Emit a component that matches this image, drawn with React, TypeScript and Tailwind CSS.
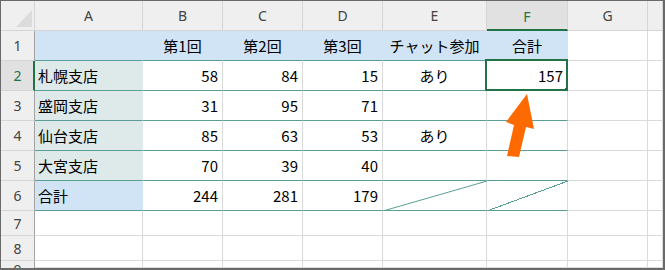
import React from "react";

type Kind = "blue" | "side" | "plain" | "out";
type Align = "l" | "c" | "r";

type CellDef = {
  t?: string;
  a?: Align;
  k: Kind;
  diag?: boolean;
  sel?: boolean;
};

const KIND_CLS: Record<Kind, string> = {
  blue: "bg-[#d0e4f5] border-r border-b border-r-[#d0e4f5] border-b-[#5b9e96]",
  side: "bg-[#deeaea] border-r border-b border-r-[#deeaea] border-b-[#5b9e96]",
  plain: "bg-white border-r border-b border-r-[#dadada] border-b-[#5b9e96]",
  out: "bg-white border-r border-b border-r-[#dadada] border-b-[#dadada]",
};

const ALIGN_CLS: Record<Align, string> = {
  l: "justify-start pl-[3px]",
  c: "justify-center",
  r: "justify-end pr-[4px]",
};

const LETTERS = ["A", "B", "C", "D", "E", "F", "G", ""];

const out: CellDef = { k: "out" };

const ROWS: CellDef[][] = [
  [
    { k: "blue" },
    { t: "第1回", a: "c", k: "blue" },
    { t: "第2回", a: "c", k: "blue" },
    { t: "第3回", a: "c", k: "blue" },
    { t: "チャット参加", a: "c", k: "blue" },
    { t: "合計", a: "c", k: "blue" },
    out,
    out,
  ],
  [
    { t: "札幌支店", a: "l", k: "side" },
    { t: "58", a: "r", k: "plain" },
    { t: "84", a: "r", k: "plain" },
    { t: "15", a: "r", k: "plain" },
    { t: "あり", a: "c", k: "plain" },
    { t: "157", a: "r", k: "plain", sel: true },
    out,
    out,
  ],
  [
    { t: "盛岡支店", a: "l", k: "side" },
    { t: "31", a: "r", k: "plain" },
    { t: "95", a: "r", k: "plain" },
    { t: "71", a: "r", k: "plain" },
    { k: "plain" },
    { k: "plain" },
    out,
    out,
  ],
  [
    { t: "仙台支店", a: "l", k: "side" },
    { t: "85", a: "r", k: "plain" },
    { t: "63", a: "r", k: "plain" },
    { t: "53", a: "r", k: "plain" },
    { t: "あり", a: "c", k: "plain" },
    { k: "plain" },
    out,
    out,
  ],
  [
    { t: "大宮支店", a: "l", k: "side" },
    { t: "70", a: "r", k: "plain" },
    { t: "39", a: "r", k: "plain" },
    { t: "40", a: "r", k: "plain" },
    { k: "plain" },
    { k: "plain" },
    out,
    out,
  ],
  [
    { t: "合計", a: "l", k: "blue" },
    { t: "244", a: "r", k: "plain" },
    { t: "281", a: "r", k: "plain" },
    { t: "179", a: "r", k: "plain" },
    { k: "plain", diag: true },
    { k: "plain", diag: true },
    out,
    out,
  ],
  [out, out, out, out, out, out, out, out],
  [out, out, out, out, out, out, out, out],
  [out, out, out, out, out, out, out, out],
];

function Cell({ c }: { c: CellDef }) {
  return (
    <div
      className={`relative flex items-center text-[15px] leading-none text-black ${KIND_CLS[c.k]} ${
        ALIGN_CLS[c.a ?? "l"]
      }`}
    >
      {c.t && <span>{c.t}</span>}
      {c.diag && (
        <svg
          className="absolute left-0 top-0 w-[calc(100%+1px)] h-[calc(100%+1px)]"
          viewBox="0 0 100 30"
          preserveAspectRatio="none"
        >
          <line
            x1="0"
            y1="30"
            x2="100"
            y2="0"
            stroke="#5b9e96"
            strokeWidth="1"
            vectorEffect="non-scaling-stroke"
            shapeRendering="crispEdges"
          />
        </svg>
      )}
      {c.sel && (
        <>
          <div className="absolute left-[-2px] top-[-2px] right-[-1px] bottom-[-1px] border-2 border-[#217346]" />
          <div className="absolute right-[-3px] bottom-[-3px] w-[5px] h-[5px] bg-[#217346]" />
        </>
      )}
    </div>
  );
}

function RowHead({ n }: { n: number }) {
  if (n === 2) {
    return (
      <div className="flex items-center justify-center bg-[#e1e1e1] border-r-2 border-r-[#217346] border-b border-b-[#d5d5d5] text-[14px] text-[#217346] font-['Noto_Sans',sans-serif] pl-[1px]">
        {n}
      </div>
    );
  }
  if (n === 9) {
    // last row is only partly in view; its number runs off the bottom
    return (
      <div className="flex items-start justify-center overflow-hidden bg-[#efefef] border-r border-r-[#a3a3a3] text-[14px] leading-none text-[#444] font-['Noto_Sans',sans-serif] pt-[2px]">
        {n}
      </div>
    );
  }
  return (
    <div className="flex items-center justify-center bg-[#efefef] border-r border-r-[#a3a3a3] border-b border-b-[#d5d5d5] text-[14px] text-[#444] font-['Noto_Sans',sans-serif]">
      {n}
    </div>
  );
}

export default function App() {
  return (
    <div className="relative w-[665px] h-[270px] overflow-hidden bg-white border-t border-l border-r-2 border-b-2 border-[#6a6a6a] font-['Noto_Sans_CJK_JP',sans-serif]">
      <div className="grid grid-cols-[34px_108px_80px_80px_80px_104px_81px_80px_15px] grid-rows-[30px_30px_30px_30px_30px_30px_30px_25px_25px_7px]">
        {/* corner */}
        <div className="relative bg-[#efefef] border-r border-b border-[#d5d5d5]">
          <svg className="absolute left-[15px] top-[9px]" width="17" height="18" viewBox="0 0 17 18">
            <polygon points="0,17 16,0 16,17" fill="#dcdcdc" />
          </svg>
        </div>
        {/* column headers */}
        {LETTERS.map((l, i) =>
          l === "F" ? (
            <div
              key={i}
              className="flex items-center justify-center bg-[#e1e1e1] border-r border-r-[#d5d5d5] border-b-2 border-b-[#217346] text-[14px] text-[#217346] font-['Noto_Sans',sans-serif] pt-[2px]"
            >
              {l}
            </div>
          ) : (
            <div
              key={i}
              className="flex items-center justify-center bg-[#efefef] border-r border-b border-[#d5d5d5] text-[14px] text-[#444] font-['Noto_Sans',sans-serif]"
            >
              {l}
            </div>
          )
        )}
        {ROWS.map((row, r) => (
          <React.Fragment key={r}>
            <RowHead n={r + 1} />
            {row.map((c, i) => (
              <Cell key={i} c={c} />
            ))}
          </React.Fragment>
        ))}
      </div>
      {/* orange pointer toward the total cell */}
      <svg
        className="absolute left-[-1px] top-[-1px] pointer-events-none"
        width="665"
        height="270"
        viewBox="0 0 665 270"
      >
        <polygon
          points="527,94 534,129 526,127 519,157 507,156 514,125 506,122"
          fill="#ff6a00"
        />
      </svg>
    </div>
  );
}
